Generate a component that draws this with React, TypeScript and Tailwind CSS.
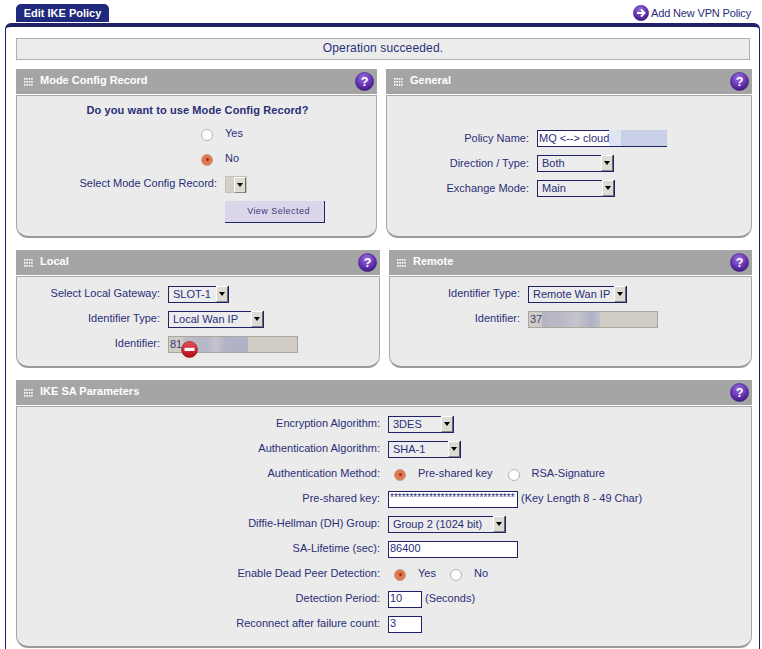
import type { ReactNode } from 'react';

function Grip() {
  const dots = [];
  for (let y = 0; y < 3; y++) {
    for (let x = 0; x < 4; x++) {
      dots.push(<rect key={`${x}-${y}`} x={x * 2.4} y={y * 3} width="1.5" height="1.7" fill="#fff" />);
    }
  }
  return (
    <svg width="9" height="8" viewBox="0 0 9 8" className="shrink-0">
      {dots}
    </svg>
  );
}

function PurpleBall({ size, children }: { size: number; children: ReactNode }) {
  return (
    <svg width={size} height={size} viewBox="0 0 18 18" className="shrink-0">
      <defs>
        <radialGradient id="ball" cx="45%" cy="30%" r="70%">
          <stop offset="0%" stopColor="#9a6fe0" />
          <stop offset="60%" stopColor="#6a35b5" />
          <stop offset="100%" stopColor="#3c1a80" />
        </radialGradient>
      </defs>
      <circle cx="9" cy="9" r="8.6" fill="url(#ball)" stroke="#3a2a80" strokeWidth="0.6" />
      {children}
    </svg>
  );
}

function HelpIcon() {
  return (
    <PurpleBall size={19}>
      <text x="9" y="13.2" textAnchor="middle" fontSize="12" fontWeight="700" fill="#fff" fontFamily="Liberation Sans, sans-serif">
        ?
      </text>
    </PurpleBall>
  );
}

function Radio({ checked }: { checked?: boolean }) {
  if (checked) {
    return (
      <span className="w-3 h-3 shrink-0 rounded-full bg-[#e0774f] border border-[#c9a08e] flex items-center justify-center">
        <span className="w-[3px] h-[3px] rounded-full bg-[#9c2c10]" />
      </span>
    );
  }
  return <span className="block w-3 h-3 shrink-0 rounded-full bg-white border border-[#b4b4b4]" />;
}

function Arrow() {
  return (
    <span className="w-[12px] h-[16px] shrink-0 bg-[#dedbd4] border-t border-l border-t-white border-l-white border-r border-b border-r-[#666] border-b-[#888] flex items-center justify-center">
      <span className="w-0 h-0 border-x-[3px] border-x-transparent border-t-[4px] border-t-black" />
    </span>
  );
}

function Select({ value, className, textClass = '-mt-[1px]' }: { value: string; className: string; textClass?: string }) {
  return (
    <div className={`h-[17px] flex justify-between border-l border-b border-r border-[#1e2268] bg-[#ececec] text-[#2a2e78] ${className}`}>
      <span className="flex-1 flex items-center pl-[4px] border-t border-[#1e2268]">
        <span className={`whitespace-pre ${textClass}`}>{value}</span>
      </span>
      <Arrow />
    </div>
  );
}

function TextBox({ children, className }: { children?: ReactNode; className: string }) {
  return (
    <div className={`h-[17px] pl-[1px] border border-[#1e2268] bg-white text-[#2a2e78] leading-[13px] overflow-hidden whitespace-nowrap ${className}`}>
      {children}
    </div>
  );
}

function ReadOnlyId({ value, blur }: { value: string; blur: string }) {
  return (
    <div className="w-[130px] h-[17px] flex border border-[#a9a69c] bg-[#d0ccc3] text-[#3c4080] leading-[14px] overflow-hidden">
      <span className="pl-[1px] whitespace-nowrap">{value}</span>
      <span className={blur} />
    </div>
  );
}

function Row({ label, labelClass, children }: { label: string; labelClass: string; children: ReactNode }) {
  return (
    <div className="h-[17px] flex items-center">
      <span className={`${labelClass} shrink-0 text-right whitespace-nowrap`}>{label}</span>
      {children}
    </div>
  );
}

function Panel({ title, className, bodyClass, children }: { title: string; className: string; bodyClass: string; children: ReactNode }) {
  return (
    <div className={`flex flex-col shrink-0 ${className}`}>
      <div className="h-[25px] shrink-0 bg-[#a5a5a5] flex items-center pl-[8px] pr-[3px]">
        <Grip />
        <span className="ml-[7px] pb-[3px] font-bold text-white">{title}</span>
        <span className="ml-auto">
          <HelpIcon />
        </span>
      </div>
      <div className={`flex-1 mt-[1px] bg-[#ebebeb] border-x border-t border-[#a8a8a8] border-b-2 border-b-[#9a9a9a] rounded-b-[12px] flex flex-col gap-[8px] ${bodyClass}`}>
        {children}
      </div>
    </div>
  );
}

const generalLabel = 'w-[150px] pr-[8px]';
const localLabel = 'w-[151px] pr-[8px] -mt-[2px]';
const remoteLabel = 'w-[138px] pr-[8px] -mt-[2px]';
const ikeLabel = 'w-[371px] pr-[8px] -mt-[2px]';

export default function App() {
  return (
    <div className="w-[762px] h-[649px] overflow-hidden bg-white text-[11px] text-[#2a2e78] font-['Liberation_Sans',Arial,sans-serif]">
      {/* Tab + link */}
      <div className="h-[23px] flex items-end pl-[16px] pr-[11px]">
        <div className="h-[18px] mb-[1px] w-[93px] bg-[#1f2a7c] rounded-t-[5px] text-white font-bold text-center leading-[18px]">
          Edit IKE Policy
        </div>
        <div className="ml-auto h-[20px] flex items-center gap-[2px]">
          <PurpleBall size={16}>
            <path d="M4.5 9h8M9 5l4 4-4 4" fill="none" stroke="#fff" strokeWidth="2" />
          </PurpleBall>
          <span className="text-[#2a2e78] tracking-[-0.15px]">Add New VPN Policy</span>
        </div>
      </div>

      {/* Main frame */}
      <div className="ml-[5px] w-[755px] h-[626px] border-x border-[#1e2268] border-t-[4px] rounded-t-[6px] pt-[11px] pl-[10px] flex flex-col">
        <div className="w-[734px] h-[22px] shrink-0 bg-[#ececec] border border-[#b0b0b0] text-center text-[12px] leading-[18px] tracking-[0.15px]">
          Operation succeeded.
        </div>

        <div className="mt-[9px] flex gap-[9px]">
          <Panel title="Mode Config Record" className="w-[361px] h-[169px]" bodyClass="pt-[7px]">
            <div className="h-[15px] pl-[2px] text-center font-bold leading-[15px] tracking-[0.1px]">Do you want to use Mode Config Record?</div>
            <div className="h-[17px] flex items-center pl-[184px]">
              <Radio />
              <span className="ml-[12px] -mt-[3px]">Yes</span>
            </div>
            <div className="h-[17px] flex items-center pl-[184px]">
              <Radio checked />
              <span className="ml-[12px] -mt-[3px]">No</span>
            </div>
            <Row label="Select Mode Config Record:" labelClass="w-[208px] pr-[8px] -mt-[2px]">
              <div className="w-[22px] h-[17px] flex justify-end border border-[#c4c0b6] bg-[#d4d0c8]">
                <Arrow />
              </div>
            </Row>
            <div className="pl-[208px]">
              <div className="w-[100px] h-[22px] bg-[#dcd6ea] border-r border-b border-[#1e2268] text-center pl-[8px] text-[9px] leading-[21px] text-[#3a3e78] tracking-[0.45px]">
                View Selected
              </div>
            </div>
          </Panel>

          <Panel title="General" className="w-[366px] h-[169px]" bodyClass="pt-[34px]">
            <Row label="Policy Name:" labelClass={generalLabel}>
              <div className="w-[130px] h-[17px] flex border-l border-b border-[#1e2268] bg-white leading-[15px]">
                <span className="pl-[1px] border-t border-[#1e2268] w-[71px] whitespace-nowrap overflow-hidden">MQ &lt;--&gt; cloud</span>
                <span className="w-[12px] bg-[#dfe4f2]" />
                <span className="flex-1 bg-[#c9cfe6]" />
              </div>
            </Row>
            <Row label="Direction / Type:" labelClass={generalLabel}>
              <Select value="Both" className="w-[77px]" textClass="" />
            </Row>
            <Row label="Exchange Mode:" labelClass={generalLabel}>
              <Select value="Main" className="w-[78px]" textClass="" />
            </Row>
          </Panel>
        </div>

        <div className="mt-[12px] flex gap-[9px]">
          <Panel title="Local" className="w-[364px] h-[118px]" bodyClass="pt-[9px]">
            <Row label="Select Local Gateway:" labelClass={localLabel}>
              <Select value="SLOT-1" className="w-[61px]" />
            </Row>
            <Row label="Identifier Type:" labelClass={localLabel}>
              <Select value="Local Wan IP" className="w-[96px]" />
            </Row>
            <Row label="Identifier:" labelClass={localLabel}>
              <div className="relative">
                <ReadOnlyId value="81" blur="ml-[1px] w-[65px] bg-[linear-gradient(90deg,#bcbcca_0%,#b6b6c6_35%,#c6c4cc_50%,#b2b2c6_65%,#b2b2c6_100%)]" />
                <svg width="17" height="17" viewBox="0 0 17 17" className="absolute left-[13px] top-[5px]">
                  <defs>
                    <linearGradient id="stop" x1="0" y1="0" x2="0" y2="1">
                      <stop offset="0%" stopColor="#e8505a" />
                      <stop offset="100%" stopColor="#b00c16" />
                    </linearGradient>
                  </defs>
                  <circle cx="8.5" cy="8.5" r="8" fill="url(#stop)" stroke="#8c1016" strokeWidth="0.6" />
                  <rect x="3.5" y="6.8" width="10" height="3.2" fill="#fff" />
                </svg>
              </div>
            </Row>
          </Panel>

          <Panel title="Remote" className="w-[363px] h-[118px]" bodyClass="pt-[9px]">
            <Row label="Identifier Type:" labelClass={remoteLabel}>
              <Select value="Remote Wan IP" className="w-[99px]" />
            </Row>
            <Row label="Identifier:" labelClass={remoteLabel}>
              <ReadOnlyId value="37" blur="w-[58px] bg-[linear-gradient(90deg,#b4b4c4_0%,#bcbcc8_40%,#c6c6ce_60%,#b0b0c4_85%,#c0c0cc_100%)]" />
            </Row>
          </Panel>
        </div>

        <div className="mt-[12px]">
          <Panel title="IKE SA Parameters" className="w-[736px] h-[268px]" bodyClass="pt-[9px]">
            <Row label="Encryption Algorithm:" labelClass={ikeLabel}>
              <Select value="3DES" className="w-[66px]" />
            </Row>
            <Row label="Authentication Algorithm:" labelClass={ikeLabel}>
              <Select value="SHA-1" className="w-[73px]" />
            </Row>
            <Row label="Authentication Method:" labelClass={ikeLabel}>
              <span className="ml-[6px]"><Radio checked /></span>
              <span className="ml-[12px] -mt-[3px] whitespace-nowrap">Pre-shared key</span>
              <span className="ml-[15px]"><Radio /></span>
              <span className="ml-[12px] -mt-[3px] whitespace-nowrap">RSA-Signature</span>
            </Row>
            <Row label="Pre-shared key:" labelClass={ikeLabel}>
              <TextBox className="w-[130px] text-[10px] !leading-[11px]">{'*'.repeat(32)}</TextBox>
              <span className="ml-[3px] -mt-[2px] whitespace-nowrap">(Key Length 8 - 49 Char)</span>
            </Row>
            <Row label="Diffie-Hellman (DH) Group:" labelClass={ikeLabel}>
              <Select value="Group 2 (1024 bit)" className="w-[118px]" />
            </Row>
            <Row label="SA-Lifetime (sec):" labelClass={ikeLabel}>
              <TextBox className="w-[130px]">86400</TextBox>
            </Row>
            <Row label="Enable Dead Peer Detection:" labelClass={ikeLabel}>
              <span className="ml-[6px]"><Radio checked /></span>
              <span className="ml-[12px] -mt-[3px]">Yes</span>
              <span className="ml-[14px]"><Radio /></span>
              <span className="ml-[12px] -mt-[3px]">No</span>
            </Row>
            <Row label="Detection Period:" labelClass={ikeLabel}>
              <TextBox className="w-[34px]">10</TextBox>
              <span className="ml-[3px] -mt-[2px]">(Seconds)</span>
            </Row>
            <Row label="Reconnect after failure count:" labelClass={ikeLabel}>
              <TextBox className="w-[34px]">3</TextBox>
            </Row>
          </Panel>
        </div>
      </div>
    </div>
  );
}
